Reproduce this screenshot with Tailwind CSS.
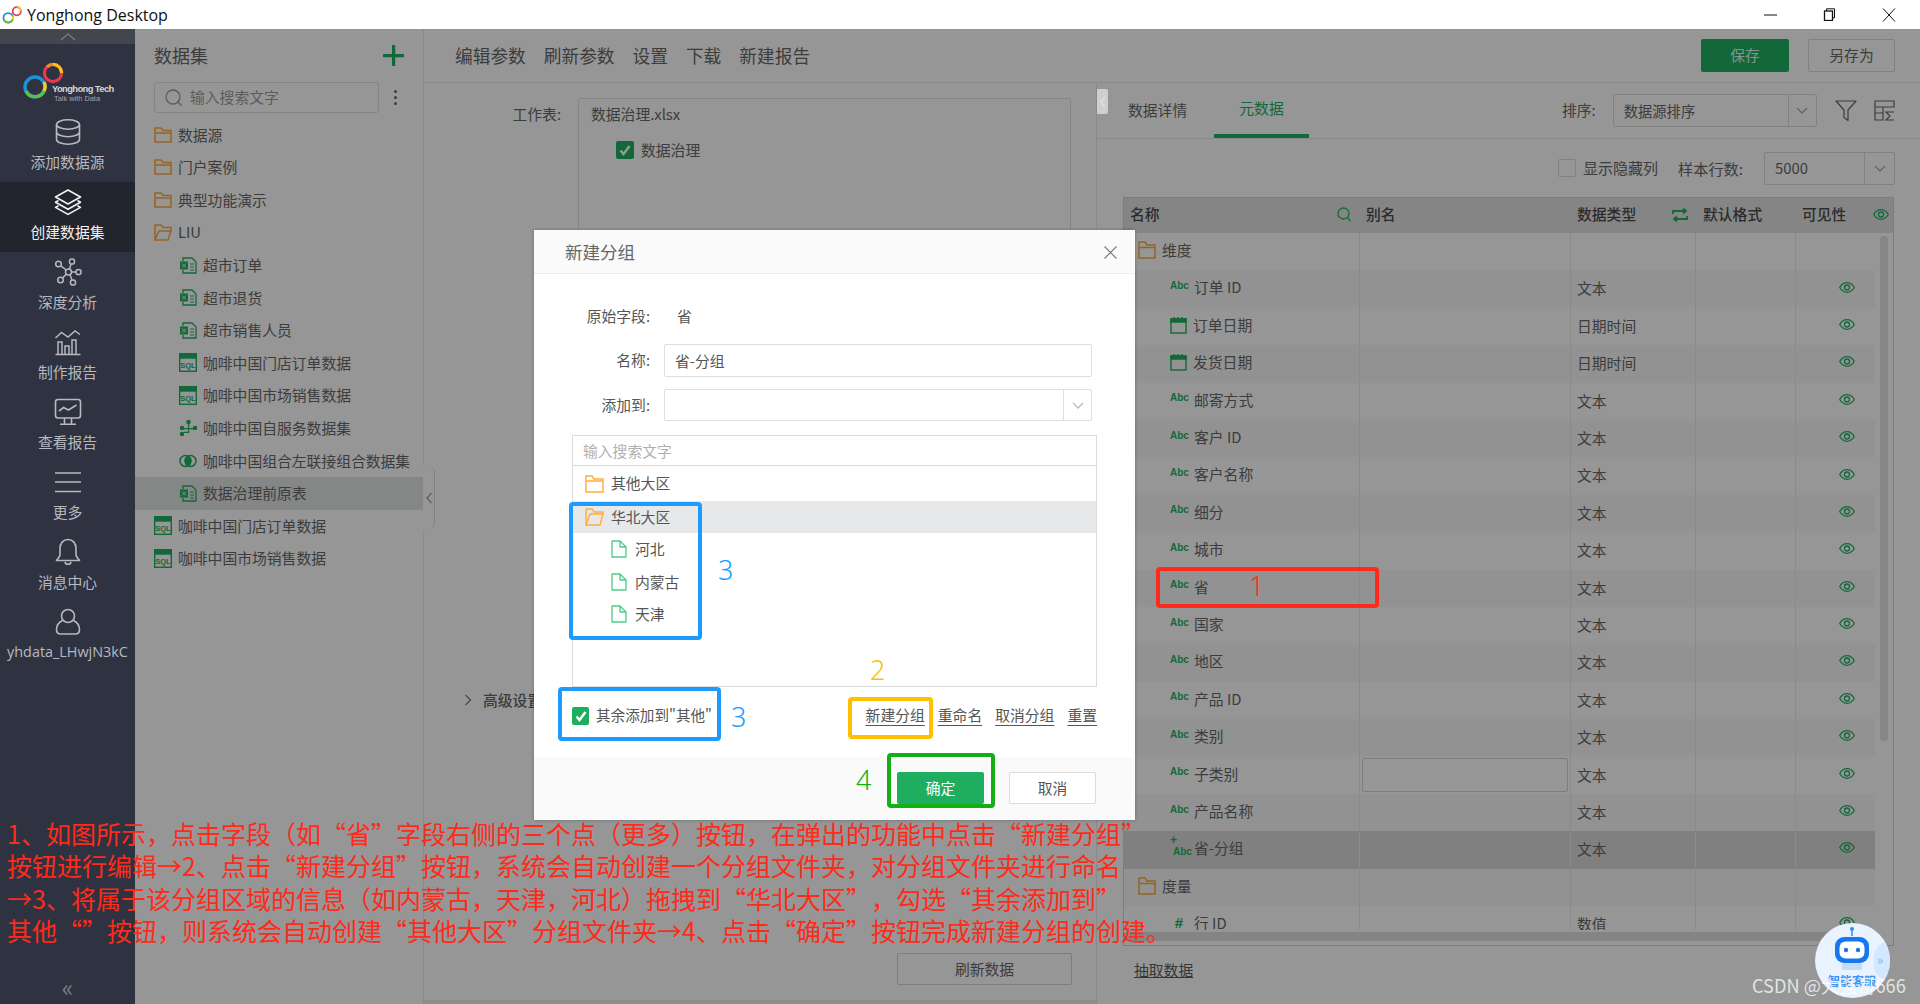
<!DOCTYPE html>
<html lang="zh-CN">
<head>
  <meta charset="UTF-8">
  <title>Yonghong Desktop</title>
  <script src="https://cdn.jsdelivr.net/npm/@tailwindcss/browser@4"></script>
</head>
<body class="w-[1920px] h-[1004px] overflow-hidden bg-[#fafafa] font-['Noto_Sans_CJK_SC',sans-serif] text-[14.8px] text-[#666] relative">

  <!-- Title bar -->
  <header class="h-[29px] bg-white flex items-center relative">
    <svg class="ml-[2px]" width="21" height="20" viewBox="0 0 44 42" fill="none">
      <circle cx="13" cy="27" r="10" stroke="#1c93d8" stroke-width="3.8"/>
      <path d="M4 31a10 10 0 0 0 18 0" stroke="#5fbd45" stroke-width="3.8"/>
      <path d="M22 31a10 10 0 0 0 0-9" stroke="#f5c925" stroke-width="3.8"/>
      <circle cx="31" cy="13" r="8.6" stroke="#e93a4c" stroke-width="3.6"/>
      <path d="M31 4.4a8.6 8.6 0 0 1 8.6 8.6" stroke="#f7c11e" stroke-width="3.6"/>
    </svg>
    <span class="ml-[4px] font-['Open_Sans',sans-serif] text-[16px] text-[#111]">Yonghong Desktop</span>
    <div class="ml-auto flex items-center mr-[24px] gap-[46px]">
      <svg width="13" height="13" viewBox="0 0 13 13" stroke="#111" fill="none"><path d="M0 7h13"/></svg>
      <svg width="13" height="13" viewBox="0 0 13 13" stroke="#111" fill="none"><rect x="1.5" y="3" width="8" height="9.5" stroke-width="1.3"/><path d="M3.5 3V.8h8v9H9.5"/></svg>
      <svg width="14" height="14" viewBox="0 0 14 14" stroke="#111" fill="none"><path d="M1 .5l12 13M13 .5L1 13.5"/></svg>
    </div>
  </header>

  <div class="flex h-[975px]">

    <!-- Sidebar -->
    <aside class="w-[135px] shrink-0 bg-[#2f3341] flex flex-col text-[#b7b9bf] text-[14.8px]">
      <div class="h-[15px] bg-[#43464f] rounded-b-[2px] flex justify-center items-center">
        <svg width="16" height="8" viewBox="0 0 16 8" fill="none" stroke="#74767d" stroke-width="1.6"><path d="M1 7l7-6 7 6"/></svg>
      </div>
      <div class="h-[68px] relative">
        <svg class="absolute left-[22px] top-[16px]" width="44" height="42" viewBox="0 0 44 42" fill="none">
          <circle cx="13" cy="27" r="10" stroke="#1c93d8" stroke-width="3.4"/>
          <path d="M4 31a10 10 0 0 0 18 0" stroke="#5fbd45" stroke-width="3.4"/>
          <path d="M22 31a10 10 0 0 0 0-9" stroke="#f5c925" stroke-width="3.4"/>
          <circle cx="31" cy="13" r="8.6" stroke="#e93a4c" stroke-width="3.2"/>
          <path d="M31 4.4a8.6 8.6 0 0 1 8.6 8.6" stroke="#f7c11e" stroke-width="3.2"/>
          <path d="M25 7a8.6 8.6 0 0 1 6-2.6" stroke="#f08a24" stroke-width="3.2"/>
        </svg>
        <span class="absolute left-[52px] top-[40px] font-['Liberation_Sans',sans-serif] font-bold text-[9.4px] tracking-[-0.6px] leading-none text-[#d5d6d9] whitespace-nowrap">Yonghong Tech</span>
        <span class="absolute left-[54px] top-[51px] font-['Liberation_Sans',sans-serif] text-[7.4px] leading-none text-[#a0a2a8] whitespace-nowrap">Talk with Data</span>
      </div>

      <a class="h-[70px] flex flex-col items-center pt-[6px]">
        <svg width="28" height="28" viewBox="0 0 28 28" fill="none" stroke="#b7b9bf" stroke-width="1.6"><ellipse cx="14" cy="6.5" rx="11.5" ry="4.7"/><path d="M2.5 6.5v15c0 2.6 5 4.7 11.5 4.7s11.5-2.1 11.5-4.7v-15M2.5 14c0 2.6 5 4.7 11.5 4.7s11.5-2.1 11.5-4.7"/></svg>
        <span class="mt-[4px] leading-[24px]">添加数据源</span>
      </a>
      <a class="h-[70px] flex flex-col items-center pt-[6px] bg-[#22252e] text-[#f1f1f2]">
        <svg width="28" height="28" viewBox="0 0 28 28" fill="none" stroke="#f1f1f2" stroke-width="1.6" stroke-linejoin="round"><path d="M14 2l12.5 7L14 16 1.5 9z"/><path d="M4.5 12.5L1.5 14.2 14 21.2l12.5-7-3-1.7"/><path d="M4.5 17.7l-3 1.7L14 26.4l12.5-7-3-1.7"/></svg>
        <span class="mt-[4px] leading-[24px]">创建数据集</span>
      </a>
      <a class="h-[70px] flex flex-col items-center pt-[6px]">
        <svg width="28" height="28" viewBox="0 0 28 28" fill="none" stroke="#b7b9bf" stroke-width="1.5"><circle cx="14.5" cy="14" r="3"/><circle cx="18" cy="3.5" r="2.6"/><circle cx="4.5" cy="6" r="2.8"/><circle cx="24.5" cy="14" r="2.6"/><circle cx="6.5" cy="22" r="2.8"/><circle cx="19" cy="24.5" r="2.6"/><path d="M15.5 11.2L17 6M6.8 7.8L12.2 12M17.5 14h4.4M12.3 16L8.6 20M16 16.7l2 5.3"/></svg>
        <span class="mt-[4px] leading-[24px]">深度分析</span>
      </a>
      <a class="h-[70px] flex flex-col items-center pt-[6px]">
        <svg width="28" height="28" viewBox="0 0 28 28" fill="none" stroke="#b7b9bf" stroke-width="1.5"><path d="M1.5 10l6-5.5L14 9l7-6 5 3.5"/><path d="M1.5 26.5h25M4 26.5V14h4v12.5M11 26.5V18h4v8.500M18 26.500V12h4v14.500"/></svg>
        <span class="mt-[4px] leading-[24px]">制作报告</span>
      </a>
      <a class="h-[70px] flex flex-col items-center pt-[6px]">
        <svg width="28" height="28" viewBox="0 0 28 28" fill="none" stroke="#b7b9bf" stroke-width="1.6"><rect x="1.500" y="1.500" width="25" height="18.500" rx="2.500"/><path d="M5 13l4.500-3.500 5 2.500 8-5M10.500 20v5.500M17.500 20v5.500M6 26.200h16"/></svg>
        <span class="mt-[4px] leading-[24px]">查看报告</span>
      </a>
      <a class="h-[70px] flex flex-col items-center pt-[6px]">
        <svg width="28" height="28" viewBox="0 0 28 28" fill="none" stroke="#b7b9bf" stroke-width="1.600"><path d="M1 5h26M1 14h26M1 23.500h26"/></svg>
        <span class="mt-[4px] leading-[24px]">更多</span>
      </a>
      <a class="h-[70px] flex flex-col items-center pt-[6px]">
        <svg width="28" height="28" viewBox="0 0 28 28" fill="none" stroke="#b7b9bf" stroke-width="1.600" stroke-linejoin="round"><path d="M14 1.500c-5 0-8 4-8 9v6c0 2.500-2 4-3.500 6h23c-1.500-2-3.500-3.500-3.500-6v-6c0-5-3-9-8-9z"/><path d="M11 24c.5 3 5.500 3 6 0"/></svg>
        <span class="mt-[4px] leading-[24px]">消息中心</span>
      </a>
      <a class="h-[70px] flex flex-col items-center pt-[6px]">
        <svg width="28" height="28" viewBox="0 0 28 28" fill="none" stroke="#b7b9bf" stroke-width="1.600"><circle cx="14" cy="8" r="6.500"/><path d="M8.500 12.500C4.500 14.500 2.500 18 2.500 21.500c0 3 1.500 4.500 4 4.500h15c2.500 0 4-1.500 4-4.500 0-3.500-2-7-6-9"/></svg>
        <span class="mt-[4px] leading-[24px] font-['Open_Sans',sans-serif] text-[14.4px] whitespace-nowrap">yhdata_LHwjN3kC</span>
      </a>

      <div class="mt-auto h-[27px] text-center text-[#7d7f86] text-[24px] leading-[20px]">«</div>
    </aside>

    <!-- Dataset list -->
    <section class="w-[289px] shrink-0 border-r border-[#e6e6e6] relative">
      <div class="h-[53px] flex items-center pl-[19px] pr-[19px] justify-between">
        <h2 class="text-[18px] text-[#666]">数据集</h2>
        <svg width="21" height="21" viewBox="0 0 21 21" fill="#1fae5f"><path d="M9 0h3.200v9H21v3.200h-8.800V21H9v-8.800H0V9h9z"/></svg>
      </div>
      <div class="flex items-center pl-[19px]">
        <div class="w-[225px] h-[31px] border border-[#dcdcdc] rounded-[3px] flex items-center pl-[10px] text-[#9a9a9a]">
          <svg width="18" height="18" viewBox="0 0 18 18" fill="none" stroke="#9a9a9a" stroke-width="1.300"><circle cx="8" cy="8" r="7"/><path d="M13 13l3.500 3.500"/></svg>
          <span class="ml-[7px]">输入搜索文字</span>
        </div>
        <div class="ml-[15px] flex flex-col gap-[3px]"><i class="w-[3px] h-[3px] rounded-full bg-[#666]"></i><i class="w-[3px] h-[3px] rounded-full bg-[#666]"></i><i class="w-[3px] h-[3px] rounded-full bg-[#666]"></i></div>
      </div>
      <ul id="datasets" class="pt-[5.500px]"></ul>
      <div class="absolute left-[288px] top-[436px] w-[12px] h-[65px] bg-[#fafafa] border-r border-[#d8d8d8] rounded-r-[8px] flex items-center justify-center">
        <svg width="6" height="12" viewBox="0 0 6 12" fill="none" stroke="#999" stroke-width="1.200"><path d="M5.500 1L1 6l4.500 5"/></svg>
      </div>
    </section>

    <!-- Main -->
    <main class="flex-1 flex flex-col min-w-0">
      <div class="h-[54px] border-b border-[#e6e6e6] flex items-center pl-[31px] pr-[25px] text-[17.700px] shrink-0">
        <div class="flex gap-[18px]">
          <a>编辑参数</a><a>刷新参数</a><a>设置</a><a>下载</a><a>新建报告</a>
        </div>
        <button class="ml-auto w-[88px] h-[33px] bg-[#1fae5f] text-[#dff3e7] text-[14.800px] rounded-[2px]">保存</button>
        <button class="ml-[19px] w-[87px] h-[33px] border border-[#d8d8d8] text-[14.800px] rounded-[2px]">另存为</button>
      </div>

      <div class="flex-1 flex min-h-0">
        <!-- Left form -->
        <div class="w-[673px] shrink-0 border-r border-[#e6e6e6] flex flex-col relative">
          <div class="flex pt-[15px]">
            <label class="w-[137px] text-right leading-[32px]">工作表:</label>
            <div class="ml-[17px] w-[493px] h-[560px] border border-[#dcdcdc] rounded-[2px] pl-[12px] pt-[3px]">
              <div class="leading-[24px]">数据治理.xlsx</div>
              <div class="flex items-center mt-[13px] ml-[25px]">
                <span class="w-[18px] h-[18px] rounded-[2px] bg-[#1fae5f] flex items-center justify-center">
                  <svg width="12" height="11" viewBox="0 0 12 11" fill="none" stroke="#fff" stroke-width="2.400"><path d="M1.500 5.500l3 3.500 6-8"/></svg>
                </span>
                <span class="ml-[7px]">数据治理</span>
              </div>
            </div>
          </div>
          <div class="flex items-center mt-[31px] pl-[40px]">
            <svg width="8" height="12" viewBox="0 0 8 12" fill="none" stroke="#777" stroke-width="1.200"><path d="M1.500 1l5 5-5 5"/></svg>
            <span class="ml-[11px] font-medium">高级设置</span>
          </div>
          <button class="mt-auto mb-[15px] ml-[473px] w-[175px] h-[32px] border border-[#d0d0d0] rounded-[2px]">刷新数据</button>
          <div class="absolute left-[673px] top-[6px] w-[11px] h-[25px] bg-[#cfcfcf] rounded-r-[2px] flex items-center justify-center z-[1]">
            <svg width="6" height="12" viewBox="0 0 6 12" fill="none" stroke="#e5e5e5" stroke-width="1.200"><path d="M5 1L1 6l4 5"/></svg>
          </div>
          <div class="h-[4px] bg-[#ececec]"></div>
        </div>

        <!-- Right: metadata -->
        <div class="flex-1 min-w-0 pr-[25px] flex flex-col">
          <div class="h-[56px] -mr-[25px] border-b border-[#e6e6e6] flex items-center pl-[31px] shrink-0">
            <a class="w-[86px] h-full flex items-center">数据详情</a>
            <a class="w-[95px] h-full flex items-center justify-center text-[#1fae5f] border-b-4 border-[#1fae5f]">元数据</a>
            <span class="ml-[253px] whitespace-nowrap">排序:</span>
            <div class="ml-[17px] w-[204px] h-[33px] border border-[#d8d8d8] rounded-[2px] flex items-center pl-[10px]">
              <span class="flex-1 text-[14.300px]">数据源排序</span>
              <span class="w-[28px] h-full border-l border-[#d8d8d8] flex items-center justify-center"><svg width="12" height="7" viewBox="0 0 12 7" fill="none" stroke="#aaa" stroke-width="1.300"><path d="M1 1l5 5 5-5"/></svg></span>
            </div>
            <svg class="ml-[18px]" width="22" height="21" viewBox="0 0 22 21" fill="none" stroke="#666" stroke-width="1.200" stroke-linejoin="round"><path d="M1 1h20l-8 9v10.500l-4-3V10z"/></svg>
            <svg class="ml-[17px]" width="21" height="21" viewBox="0 0 21 21" fill="none" stroke="#666" stroke-width="1.200"><path d="M1 1h19v6H1zM1 7v13h8V7M9 13H1M20 12h-8l4 4-4 4h8"/></svg>
          </div>

          <div class="h-[58px] flex items-center justify-end shrink-0">
            <span class="w-[18px] h-[18px] border border-[#d8d8d8] rounded-[2px]"></span>
            <span class="ml-[7px] text-[15px]">显示隐藏列</span>
            <span class="ml-[20px] text-[15.200px]">样本行数:</span>
            <div class="ml-[21px] w-[131px] h-[33px] border border-[#d8d8d8] rounded-[2px] flex items-center pl-[10px]">
              <span class="flex-1">5000</span>
              <span class="w-[30px] h-full border-l border-[#d8d8d8] flex items-center justify-center"><svg width="12" height="7" viewBox="0 0 12 7" fill="none" stroke="#aaa" stroke-width="1.300"><path d="M1 1l5 5 5-5"/></svg></span>
            </div>
          </div>

          <div class="ml-[26px] w-[771px] h-[749px] border border-[#cfcfcf] shrink-0 relative overflow-hidden">
            <!-- Header -->
            <div class="h-[35px] pb-[2px] bg-[#dedede] grid grid-cols-[236px_211px_125px_100px_99px] font-medium text-[#4a4a4a] items-center">
              <div class="pl-[6px] flex items-center justify-between pr-[8px]">名称
                <svg width="15" height="15" viewBox="0 0 15 15" fill="none" stroke="#1fae5f" stroke-width="1.300"><circle cx="6.500" cy="6.500" r="5.500"/><path d="M10.500 10.500l3 3.500"/></svg>
              </div>
              <div class="pl-[6px]">别名</div>
              <div class="pl-[6px] flex items-center justify-between pr-[8px]">数据类型
                <svg width="16" height="14" viewBox="0 0 16 14" fill="none" stroke="#1fae5f" stroke-width="1.800"><path d="M1 6V3h12M11 .5L14 3l-3 2.500M15 8v3H3M5 13.500L2 11l3-2.500"/></svg>
              </div>
              <div class="pl-[7px]">默认格式</div>
              <div class="pl-[6px] flex items-center justify-between pr-[6px]">可见性
                <svg width="16" height="11" viewBox="0 0 16 11" fill="none" stroke="#1fae5f" stroke-width="1.300"><path d="M.7 5.500C3 1.800 5.500.7 8 .7s5 1.100 7.300 4.800C13 9.200 10.500 10.300 8 10.300S3 9.200.7 5.500z"/><circle cx="8" cy="5.500" r="2.500"/></svg>
              </div>
            </div>
            <!-- Rows -->
            <div id="rows" class="h-[697px] w-[751px] overflow-hidden"></div>
            <!-- Scrollbars -->
            <div class="absolute left-[756px] top-[38px] w-[8px] h-[505px] rounded-[4px] bg-[#e0e0e0]"></div>
            <div class="absolute left-0 right-[20px] top-[734px] h-[9px] bg-[#dcdcdc]"></div>
          </div>
          <a class="ml-[37px] mt-[13px] underline text-[#5a5a5a]">抽取数据</a>
        </div>
      </div>
    </main>
  </div>

  <!-- Dim layer -->
  <div class="absolute left-[135px] right-0 top-[29px] bottom-0 bg-black/40"></div>

  <!-- Modal -->
  <div class="absolute left-[534px] top-[230px] w-[601px] h-[590px] bg-white flex flex-col text-[#555] shadow-[0_0_3px_rgba(0,0,0,0.3)]">
    <div class="h-[44px] pt-[1px] bg-[#fafafa] border-b border-[#eee] flex items-center pl-[31px] pr-[18px] justify-between">
      <span class="text-[17.500px] text-[#666]">新建分组</span>
      <svg width="13" height="13" viewBox="0 0 13 13" fill="none" stroke="#777" stroke-width="1.100"><path d="M.5.5l12 12M12.500.5l-12 12"/></svg>
    </div>
    <div class="pl-[38px] pr-[38px] flex-1">
      <div class="flex items-center h-[32px] mt-[26px]">
        <label class="w-[78px] text-right">原始字段:</label><span class="ml-[27px]">省</span>
      </div>
      <div class="flex items-center mt-[12px]">
        <label class="w-[78px] text-right">名称:</label>
        <div class="ml-[14px] w-[428px] h-[33px] border border-[#dedede] rounded-[2px] pl-[10px] leading-[31px]">省-分组</div>
      </div>
      <div class="flex items-center mt-[12px]">
        <label class="w-[78px] text-right">添加到:</label>
        <div class="ml-[14px] w-[428px] h-[32px] border border-[#dedede] rounded-[2px] flex justify-end">
          <span class="w-[28px] h-full border-l border-[#dedede] flex items-center justify-center"><svg width="12" height="7" viewBox="0 0 12 7" fill="none" stroke="#bbb" stroke-width="1.300"><path d="M1 1l5 5 5-5"/></svg></span>
        </div>
      </div>
      <div class="mt-[14px] w-[525px] h-[252px] border border-[#dcdcdc]">
        <div class="h-[30px] border-b border-[#dcdcdc] pl-[10px] leading-[29px] text-[#b0b0b0]">输入搜索文字</div>
        <div class="h-[35px] flex items-center pl-[12px]">
          <svg width="19" height="18" viewBox="0 0 19 18" fill="none" stroke="#ffad3b" stroke-width="1.400"><path d="M1 17V1h6l2 3h9v13zM1 6h17"/></svg>
          <span class="ml-[7px]">其他大区</span>
        </div>
        <div class="h-[32px] bg-[#e7e8ea] flex items-center pl-[12px]">
          <svg width="19" height="18" viewBox="0 0 19 18" fill="none" stroke="#ffad3b" stroke-width="1.400"><path d="M1 17V1h6l2 3h9v2H5l-4 11h14l3-11"/></svg>
          <span class="ml-[7px]">华北大区</span>
        </div>
        <div class="h-[32.500px] flex items-center pl-[38px]">
          <svg width="16" height="18" viewBox="0 0 16 18" fill="none" stroke="#4ecb85" stroke-width="1.300" stroke-linejoin="round"><path d="M1 1h8l6 6v10H1zM9 1v6h6"/></svg>
          <span class="ml-[8px]">河北</span>
        </div>
        <div class="h-[32.500px] flex items-center pl-[38px]">
          <svg width="16" height="18" viewBox="0 0 16 18" fill="none" stroke="#4ecb85" stroke-width="1.300" stroke-linejoin="round"><path d="M1 1h8l6 6v10H1zM9 1v6h6"/></svg>
          <span class="ml-[8px]">内蒙古</span>
        </div>
        <div class="h-[32.500px] flex items-center pl-[38px]">
          <svg width="16" height="18" viewBox="0 0 16 18" fill="none" stroke="#4ecb85" stroke-width="1.300" stroke-linejoin="round"><path d="M1 1h8l6 6v10H1zM9 1v6h6"/></svg>
          <span class="ml-[8px]">天津</span>
        </div>
      </div>
      <div class="flex items-center mt-[20px] h-[18px]">
        <span class="w-[17px] h-[18px] rounded-[2px] bg-[#1fae5f] flex items-center justify-center">
          <svg width="12" height="11" viewBox="0 0 12 11" fill="none" stroke="#fff" stroke-width="2.400"><path d="M1.500 5.500l3 3.500 6-8"/></svg>
        </span>
        <span class="ml-[7px] -mt-[2px] text-[14.600px] whitespace-nowrap">其余添加到"其他"</span>
        <div class="ml-auto flex gap-[13px] -mt-[2px]">
          <a class="underline underline-offset-[4px]">新建分组</a><a class="underline underline-offset-[4px]">重命名</a><a class="underline underline-offset-[4px]">取消分组</a><a class="underline underline-offset-[4px]">重置</a>
        </div>
      </div>
    </div>
    <div class="h-[63px] bg-[#fafafa] flex pl-[363px] pt-[15px]">
      <button class="w-[87px] h-[32px] bg-[#1fae5f] rounded-[2px] text-white">确定</button>
      <button class="ml-[25px] w-[87px] h-[32px] bg-white border border-[#dcdcdc] rounded-[2px]">取消</button>
    </div>
  </div>

  <!-- Hand-drawn annotations -->
  <div class="absolute left-[1156px] top-[567px] w-[223px] h-[41px] border-4 border-[#ff2a1a] rounded-[4px]"></div>
  <span class="absolute left-[1249px] top-[568px] text-[27px] leading-[36px] font-['Noto_Sans',sans-serif] font-light text-[#ff2a1a]">1</span>
  <div class="absolute left-[569px] top-[502px] w-[133px] h-[138px] border-4 border-[#1e9bff] rounded-[4px]"></div>
  <span class="absolute left-[718px] top-[552px] text-[27px] leading-[36px] font-['Noto_Sans',sans-serif] font-light text-[#1e9bff]">3</span>
  <div class="absolute left-[558px] top-[687px] w-[163px] h-[54px] border-4 border-[#1e9bff] rounded-[4px]"></div>
  <span class="absolute left-[731px] top-[699px] text-[27px] leading-[36px] font-['Noto_Sans',sans-serif] font-light text-[#1e9bff]">3</span>
  <div class="absolute left-[848px] top-[697px] w-[85px] h-[42px] border-4 border-[#ffc000] rounded-[4px]"></div>
  <span class="absolute left-[870px] top-[652px] text-[27px] leading-[36px] font-['Noto_Sans',sans-serif] font-light text-[#ffc000]">2</span>
  <div class="absolute left-[887px] top-[753px] w-[108px] h-[55px] border-4 border-[#13b013] rounded-[4px]"></div>
  <span class="absolute left-[856px] top-[762px] text-[27px] leading-[36px] font-['Noto_Sans',sans-serif] font-light text-[#13b013]">4</span>

  <div class="absolute left-[7px] top-[817px] text-[25px] leading-[32.300px] [text-spacing-trim:space-all] text-[#ff2a1a] whitespace-nowrap">
    <p>1、如图所示，点击字段（如“省”字段右侧的三个点（更多）按钮，在弹出的功能中点击“新建分组”</p>
    <p>按钮进行编辑→2、点击“新建分组”按钮，系统会自动创建一个分组文件夹，对分组文件夹进行命名</p>
    <p>→3、将属于该分组区域的信息（如内蒙古，天津，河北）拖拽到“华北大区”，勾选“其余添加到”</p>
    <p>其他“”按钮，则系统会自动创建“其他大区”分组文件夹→4、点击“确定”按钮完成新建分组的创建。</p>
  </div>

  <!-- Help bot -->
  <div class="absolute left-[1815px] top-[923px] w-[75px] h-[75px] rounded-full bg-[#e9f3ff] overflow-hidden">
    <div class="absolute right-0 top-[18px] w-[16px] h-[40px] rounded-l-full bg-[#d3e7ff] text-[#7fb6f7] text-[13px] leading-[38px] pl-[3px]">»</div>
    <svg class="absolute left-[17px] top-[3px]" width="40" height="46" viewBox="0 0 40 46">
      <circle cx="20" cy="3" r="2" fill="#2a8cf5"/><path d="M20 5v5" stroke="#2a8cf5" stroke-width="1.500"/>
      <path d="M10 38c2-4 18-4 20 0v6H10z" fill="#c4def9"/>
      <rect x="3" y="11" width="34" height="26" rx="9" fill="#1677ee"/>
      <rect x="7.500" y="15.500" width="25" height="17" rx="6" fill="#fff"/>
      <circle cx="14" cy="24" r="2.200" fill="#1677ee"/><circle cx="26" cy="24" r="2.200" fill="#1677ee"/>
    </svg>
    <span class="absolute left-[13px] top-[50px] text-[12px] font-bold leading-[16px] text-[#3b92f2] whitespace-nowrap">智能客服</span>
  </div>
  <span class="absolute left-[1752px] top-[973px] text-[18.200px] leading-[24px] text-white/75 whitespace-nowrap">CSDN @大强哥666</span>

  <script>
    // Left panel dataset tree
    const icons = {
      closed: `<svg width="18" height="16" viewBox="0 0 18 16" fill="none" stroke="#f5a83c" stroke-width="1.500"><path d="M1 15V1h6l2 2.500h8V15zM1 6h16"/></svg>`,
      open: `<svg width="18" height="17" viewBox="0 0 18 17" fill="none" stroke="#f5a83c" stroke-width="1.500"><path d="M1 16V1h6l2 2.500h8V7H5L1 16h13l3-9"/></svg>`,
      excel: `<svg width="18" height="17" viewBox="0 0 18 17" fill="none" stroke="#1fae5f" stroke-width="1.300"><path d="M4 4V1h9l4 4v11H4v-3"/><rect x="1" y="4.500" width="8" height="8" fill="#1fae5f" stroke="none"/><path d="M3 6.500l4 4M7 6.500l-4 4" stroke="#fafafa" stroke-width="1"/><path d="M11 7h4M11 10h4M11 13h4" stroke-width="1"/></svg>`,
      sql: `<svg width="18" height="19" viewBox="0 0 18 19" fill="none"><rect x=".7" y=".7" width="16.600" height="17.600" stroke="#1fae5f" stroke-width="1.400"/><rect x=".7" y=".7" width="16.600" height="5" fill="#1fae5f"/><text x="9" y="15" font-family="Liberation Sans" font-size="7.500" font-weight="700" fill="#1fae5f" text-anchor="middle">SQL</text></svg>`,
      flow: `<svg width="18" height="18" viewBox="0 0 18 18" fill="#1fae5f"><rect x="7.500" y="1" width="4" height="4" rx="1"/><rect x="1" y="7" width="4" height="4" rx="1"/><rect x="1" y="13" width="4" height="4" rx="1"/><rect x="14" y="7" width="4" height="4" rx="1"/><path d="M9 5h1.200v4h4v1.200h-4V14H5v-1.200h4V10.200H5V9h4z"/></svg>`,
      venn: `<svg width="18" height="14" viewBox="0 0 18 14" fill="none" stroke="#1fae5f" stroke-width="1.500"><circle cx="6.500" cy="7" r="5.500"/><circle cx="11.500" cy="7" r="5.500"/><path d="M9 2.400a5.500 5.500 0 0 1 0 9.200 5.500 5.500 0 0 1 0-9.200z" fill="#1fae5f"/></svg>`,
    };
    const datasets = [
      ["closed", "数据源", 0], ["closed", "门户案例", 0], ["closed", "典型功能演示", 0], ["open", "LIU", 0],
      ["excel", "超市订单", 1], ["excel", "超市退货", 1], ["excel", "超市销售人员", 1],
      ["sql", "咖啡中国门店订单数据", 1], ["sql", "咖啡中国市场销售数据", 1],
      ["flow", "咖啡中国自服务数据集", 1], ["venn", "咖啡中国组合左联接组合数据集", 1],
      ["excel", "数据治理前原表", 1, true],
      ["sql", "咖啡中国门店订单数据", 0], ["sql", "咖啡中国市场销售数据", 0],
    ];
    document.getElementById("datasets").innerHTML = datasets.map(([icon, name, nested, active]) => `
      <li class="h-[32.600px] flex items-center whitespace-nowrap ${nested ? "pl-[44px]" : "pl-[19px]"} ${active ? "bg-[#dee1e0]" : ""}">
        <span class="w-[18px] h-[19px] flex items-center">${icons[icon]}</span>
        <span class="ml-[6px]">${name}</span>
      </li>`).join("");

    // Metadata table
    const abc = `<span class="w-[18px] -mt-[4px] text-[10px] font-bold font-['Liberation_Sans',sans-serif] text-[#1fae5f]">Abc</span>`;
    const cal = `<svg width="17" height="18" viewBox="0 0 17 18" fill="none" stroke="#1fae5f" stroke-width="1.400"><rect x="1" y="3" width="15" height="14"/><path d="M1 3h15v3H1z" fill="#1fae5f"/><path d="M4 3V1M8 3V1M12 3V1"/></svg>`;
    const plusAbc = `<span class="relative w-[18px] pl-[3px] mt-[6px] text-[10px] font-bold font-['Liberation_Sans',sans-serif] text-[#1fae5f]"><b class="absolute left-0 -top-[13px] text-[12px]">+</b>Abc</span>`;
    const hash = `<span class="w-[18px] text-center text-[15px] font-bold font-['Liberation_Sans',sans-serif] text-[#1fae5f]">#</span>`;
    const eye = `<svg width="16" height="11" viewBox="0 0 16 11" fill="none" stroke="#1fae5f" stroke-width="1.300"><path d="M.7 5.500C3 1.800 5.500.7 8 .7s5 1.100 7.300 4.800C13 9.200 10.500 10.300 8 10.300S3 9.200.7 5.500z"/><circle cx="8" cy="5.500" r="2.500"/></svg>`;
    const fields = [
      { folder: "维度" },
      { name: "订单 ID" }, { name: "订单日期", icon: cal, type: "日期时间" }, { name: "发货日期", icon: cal, type: "日期时间" },
      { name: "邮寄方式" }, { name: "客户 ID" }, { name: "客户名称" }, { name: "细分" }, { name: "城市" }, { name: "省" },
      { name: "国家" }, { name: "地区" }, { name: "产品 ID" }, { name: "类别" }, { name: "子类别", input: true },
      { name: "产品名称" }, { name: "省-分组", icon: plusAbc, selected: true },
      { folder: "度量" }, { name: "行 ID", icon: hash, type: "数值" },
    ];
    document.getElementById("rows").innerHTML = fields.map((f, i) => {
      const rowBg = f.selected ? "bg-[#d5d5d5]" : i % 2 ? "bg-[#f3f3f3]" : "bg-[#fafafa]";
      const nameCell = f.folder
        ? `<div class="pl-[14px] pb-[3px] flex items-center border-r border-[#e6e6e6] h-full">
             <svg width="18" height="18" viewBox="0 0 18 18" fill="none" stroke="#f5a83c" stroke-width="1.500"><path d="M1 17V1h6l2 3h8v13zM1 6.500h16"/></svg>
             <span class="ml-[6px]">${f.folder}</span>
           </div>`
        : `<div class="pl-[46px] pb-[3px] flex items-center border-r border-[#e6e6e6] h-full">
             ${f.icon || abc}<span class="ml-[6px]">${f.name}</span>
           </div>`;
      const alias = f.input
        ? `<div class="border-r border-[#e6e6e6] h-full p-[2px]"><div class="h-full border border-[#d0d0d0] rounded-[2px]"></div></div>`
        : `<div class="border-r border-[#e6e6e6] h-full"></div>`;
      return `<div class="h-[37.400px] grid grid-cols-[236px_211px_125px_100px_79px] items-center ${rowBg}">
        ${nameCell}${alias}
        <div class="pl-[6px] pb-[1px] border-r border-[#e6e6e6] h-full flex items-center">${f.folder ? "" : f.type || "文本"}</div>
        <div class="border-r border-[#e6e6e6] h-full"></div>
        <div class="pl-[43px] pb-[4px] flex items-center h-full">${f.folder ? "" : eye}</div>
      </div>`;
    }).join("");
  </script>
</body>
</html>
